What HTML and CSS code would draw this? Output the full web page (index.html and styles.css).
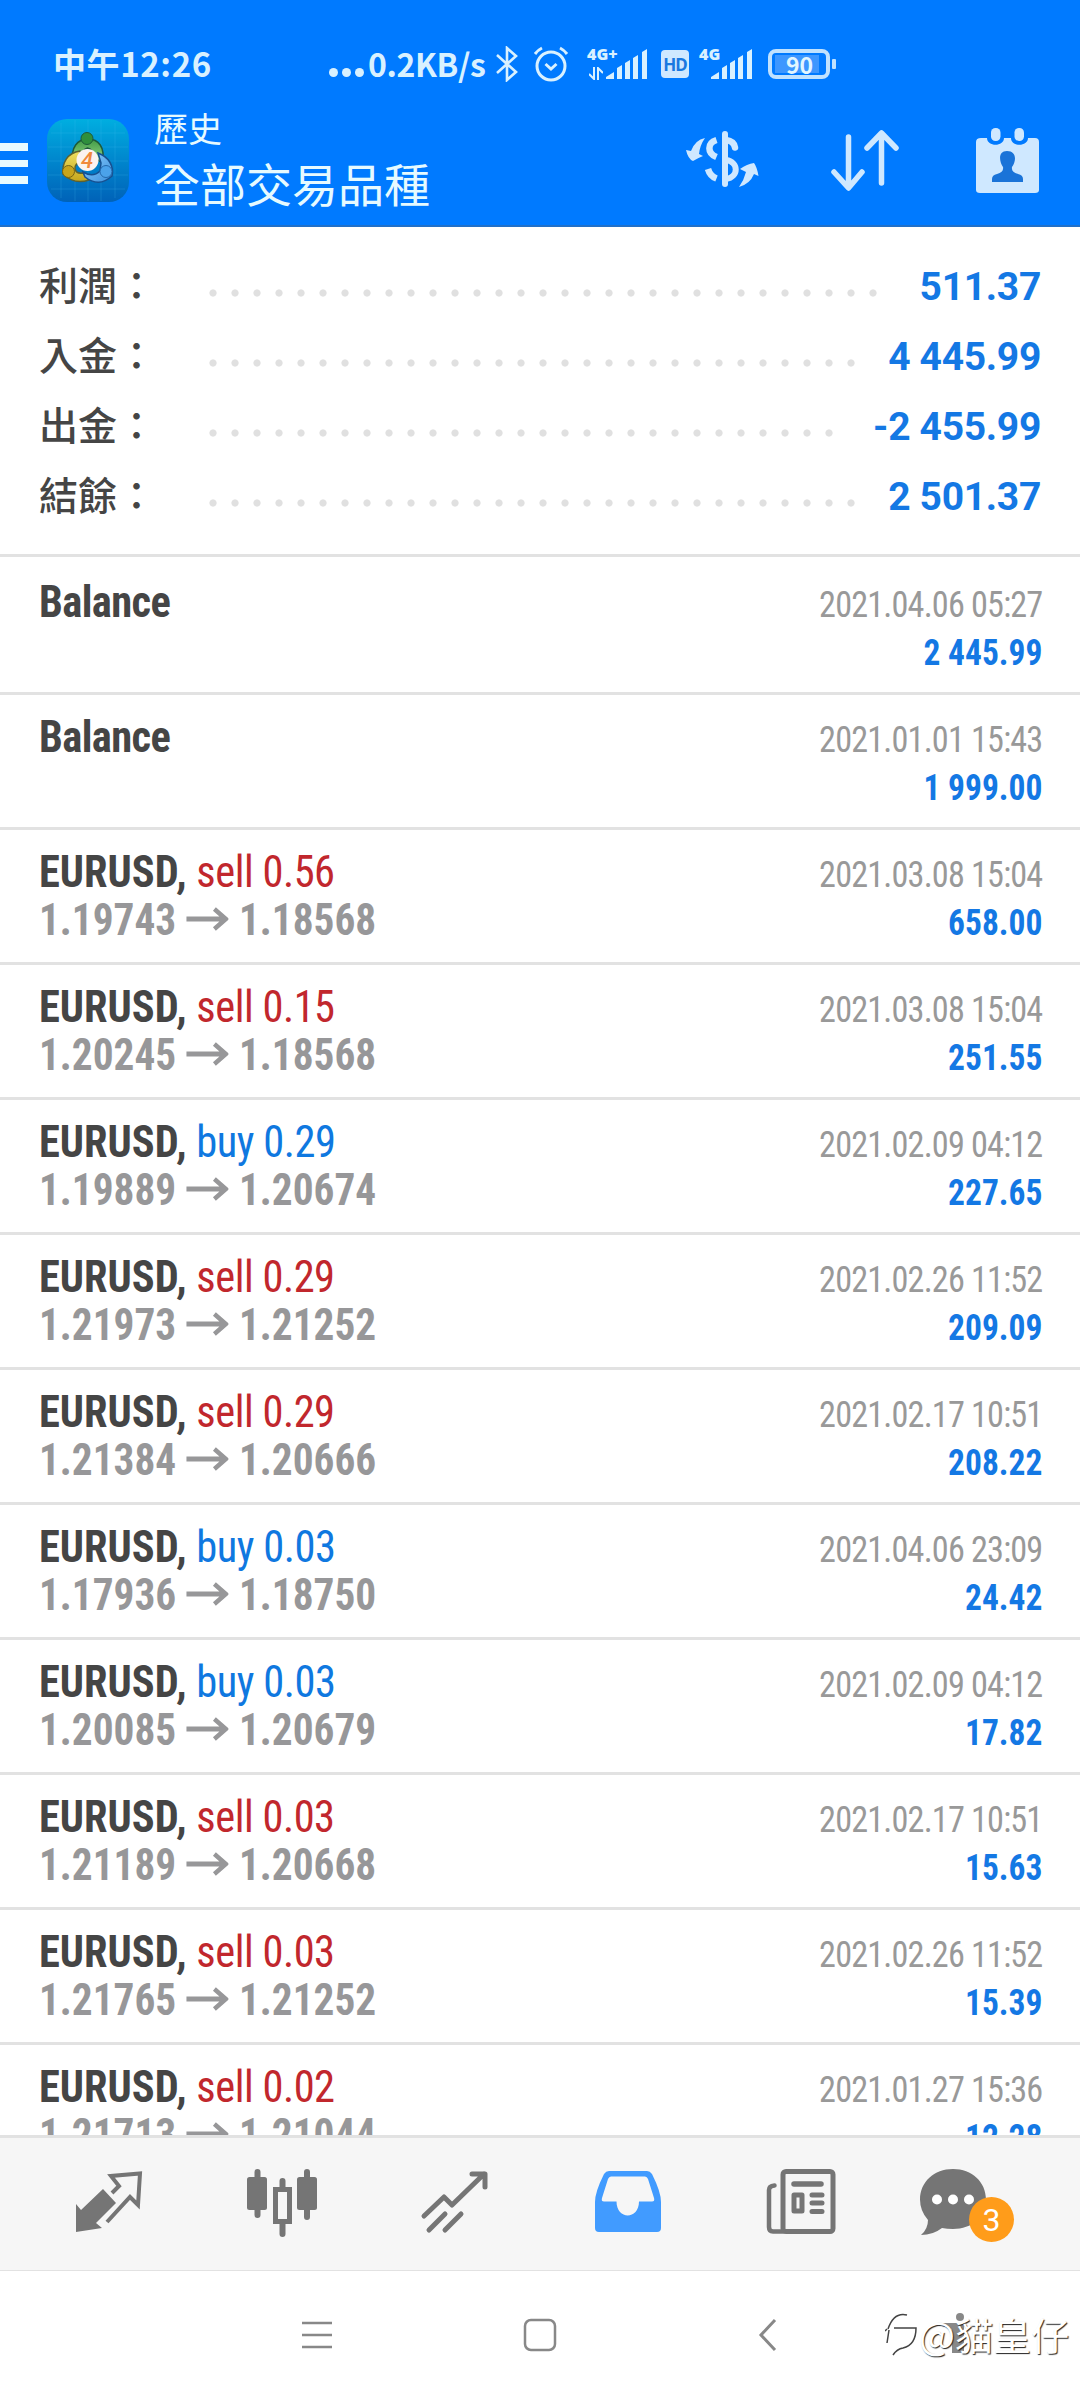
FILE: index.html
```html
<!DOCTYPE html>
<html lang="zh-Hant">
<head>
<meta charset="utf-8">
<title>歷史</title>
<link rel="stylesheet" href="styles.css">
</head>
<body>
<svg width="0" height="0" class="defs">
  <symbol id="arrow" viewBox="0 0 45 24"><path d="M0 12H43M30 2L42 12L30 22" fill="none" stroke="currentColor" stroke-width="4.800"/></symbol>
  <symbol id="bars" viewBox="0 0 42 30"><path d="M0 30v-2l8-5v7zM11 30V19l5-3v14zM19 30V14l5-3v19zM27 30V9l5-3v24zM36 30V3l5-3v30z" fill="currentColor"/></symbol>
</svg>
<div class="screen">
  <header class="top">
    <div class="status">
      <span class="clock">中午12:26</span>
      <span class="dots3"><i></i><i></i><i></i></span>
      <span class="speed">0.2KB/s</span>
      <svg class="bt" width="22" height="36" viewBox="0 0 22 36"><path d="M1 9L20 26L11 34V2L20 10L1 27" fill="none" stroke="currentColor" stroke-width="2.600"/></svg>
      <svg class="alarm" width="36" height="36" viewBox="0 0 36 36" fill="none" stroke="currentColor" stroke-width="3"><circle cx="18" cy="20" r="14"/><path d="M12.500 18L18 23L23.500 18M2 8Q5 4 9 2M34 8Q31 4 27 2"/></svg>
      <span class="net"><b>4G+</b><svg width="14" height="13" viewBox="0 0 14 13"><path d="M5 0V12L0 7M9 13V1L14 6" fill="none" stroke="currentColor" stroke-width="2"/></svg></span>
      <svg class="sig" width="42" height="30"><use href="#bars"/></svg>
      <span class="hd">HD</span>
      <span class="net net2"><b>4G</b></span>
      <svg class="sig" width="42" height="30"><use href="#bars"/></svg>
      <span class="batt"><span class="level">90</span></span><i class="cap"></i>
    </div>
    <div class="bar">
      <div class="burger"><i></i><i></i><i></i></div>
      <svg class="logo" width="82" height="83" viewBox="0 0 82 83">
        <defs>
          <linearGradient id="sky" x1="0" y1="0" x2="0" y2="1"><stop offset="0" stop-color="#00aee0"/><stop offset=".5" stop-color="#0086cd"/><stop offset="1" stop-color="#0062b8"/></linearGradient>
          <linearGradient id="grn" x1="0" y1="0" x2="0" y2="1"><stop offset="0" stop-color="#3f9a45"/><stop offset="1" stop-color="#9cd98a"/></linearGradient>
          <linearGradient id="ylw" x1="0" y1="0" x2="0" y2="1"><stop offset="0" stop-color="#f0e060"/><stop offset="1" stop-color="#c4a61c"/></linearGradient>
          <linearGradient id="blu" x1="0" y1="0" x2="1" y2="1"><stop offset="0" stop-color="#8ed0ff"/><stop offset="1" stop-color="#3a8edb"/></linearGradient>
        </defs>
        <rect width="82" height="83" rx="20" fill="url(#sky)"/>
        <path d="M14 4V79M28 1V82M41 1V82M54 1V82M68 4V79M4 14H78M1 28H81M1 42H81M1 56H81M4 70H78" stroke="#4cc3ee" stroke-opacity=".2" fill="none"/>
        <path d="M26 44C23 28 31 20 41 20S59 28 55 44L47 38Q46 30 40.500 29Q35 30 34 40Z" fill="url(#grn)" stroke="#1d5a3a" stroke-width="1.500"/>
        <path d="M33 32C20 34 15 44 16 55Q27 66 42 61L36 54Q29 55 28 50T35 42Z" fill="url(#ylw)" stroke="#5d6130" stroke-width="1.500"/>
        <path d="M51 34C62 38 67 47 65 57Q52 69 38 58L36 53Q46 59 53 52L54 44Z" fill="url(#blu)" stroke="#175090" stroke-width="1.500"/>
        <circle cx="40" cy="19.500" r="6" fill="#2f8f3c" stroke="#1d5a3a"/>
        <circle cx="21.500" cy="52.500" r="6" fill="#c8a51c" stroke="#746417"/>
        <circle cx="59" cy="52.500" r="6" fill="#4ba2ea" stroke="#2368ac"/>
        <circle cx="40.500" cy="41" r="11" fill="#fbf3ef"/>
        <text x="40" y="48.500" text-anchor="middle" class="four">4</text>
      </svg>
      <div class="titles"><div class="t1">歷史</div><div class="t2">全部交易品種</div></div>
      <div class="actions">
        <svg width="74" height="66" viewBox="0 0 74 66"><g fill="none" stroke="currentColor"><path d="M40 6V56" stroke-width="6" stroke-linecap="round"/><path d="M31.500 12C22 15 22 25 31.500 29M23 41Q25 48 31.500 50.500" stroke-width="6.500"/><path d="M41 12Q49 13 50 19.500" stroke-width="6.500" stroke-linecap="round"/><path d="M41 32C54 34 54 49 41 51" stroke-width="6"/></g><path d="M1 22L6 23Q10 12 20 10Q15 17 14 26L18 28Q13 30 8 33Q3 31 1 22ZM54 59Q59 52 61 44L55 41Q62 36 69 35Q72 39 73.500 48L69 46Q65 56 54 59Z" fill="currentColor"/></svg>
        <svg width="68" height="66" viewBox="0 0 68 66"><path d="M17.500 9V59M3 44L17.500 60L31 44M50.500 55V6M36 20L50.500 5L65 20" fill="none" stroke="currentColor" stroke-width="5.500" stroke-linecap="round" stroke-linejoin="round"/></svg>
        <svg width="64" height="66" viewBox="0 0 64 66"><path d="M5 10H11C11 19 28 19 28 10H35C35 19 52 19 52 10H59Q63 10 63 14V62Q63 65 59 65H4Q0 65 0 62V14Q0 10 5 10Z" fill="currentColor"/><rect x="15" y="0" width="9.500" height="13" rx="4.500" fill="currentColor"/><rect x="38.500" y="0" width="9.500" height="13" rx="4.500" fill="currentColor"/><path d="M31 23C22 23 23 33 27 39Q28 44 21 46Q16 47 16 51V54H47V51Q47 47 42 46Q35 44 36 39C41 32 40 23 31 23Z" fill="#1a73d8"/></svg>
      </div>
    </div>
  </header>

  <section class="summary">
    <div class="sum"><span class="lab">利潤：</span><span class="lead" style="--n:31"></span><span class="val">511.37</span></div>
    <div class="sum"><span class="lab">入金：</span><span class="lead" style="--n:30"></span><span class="val">4 445.99</span></div>
    <div class="sum"><span class="lab">出金：</span><span class="lead" style="--n:29"></span><span class="val">-2 455.99</span></div>
    <div class="sum"><span class="lab">結餘：</span><span class="lead" style="--n:30"></span><span class="val">2 501.37</span></div>
  </section>

  <main class="list">
    <div class="row"><div class="l"><div class="sym bal">Balance</div></div><div class="r"><div class="date">2021.04.06 05:27</div><div class="amt">2 445.99</div></div></div>
    <div class="row"><div class="l"><div class="sym bal">Balance</div></div><div class="r"><div class="date">2021.01.01 15:43</div><div class="amt">1 999.00</div></div></div>
    <div class="row"><div class="l"><div class="sym">EURUSD, <span class="sell">sell 0.56</span></div><div class="px">1.19743<svg><use href="#arrow"/></svg>1.18568</div></div><div class="r"><div class="date">2021.03.08 15:04</div><div class="amt">658.00</div></div></div>
    <div class="row"><div class="l"><div class="sym">EURUSD, <span class="sell">sell 0.15</span></div><div class="px">1.20245<svg><use href="#arrow"/></svg>1.18568</div></div><div class="r"><div class="date">2021.03.08 15:04</div><div class="amt">251.55</div></div></div>
    <div class="row"><div class="l"><div class="sym">EURUSD, <span class="buy">buy 0.29</span></div><div class="px">1.19889<svg><use href="#arrow"/></svg>1.20674</div></div><div class="r"><div class="date">2021.02.09 04:12</div><div class="amt">227.65</div></div></div>
    <div class="row"><div class="l"><div class="sym">EURUSD, <span class="sell">sell 0.29</span></div><div class="px">1.21973<svg><use href="#arrow"/></svg>1.21252</div></div><div class="r"><div class="date">2021.02.26 11:52</div><div class="amt">209.09</div></div></div>
    <div class="row"><div class="l"><div class="sym">EURUSD, <span class="sell">sell 0.29</span></div><div class="px">1.21384<svg><use href="#arrow"/></svg>1.20666</div></div><div class="r"><div class="date">2021.02.17 10:51</div><div class="amt">208.22</div></div></div>
    <div class="row"><div class="l"><div class="sym">EURUSD, <span class="buy">buy 0.03</span></div><div class="px">1.17936<svg><use href="#arrow"/></svg>1.18750</div></div><div class="r"><div class="date">2021.04.06 23:09</div><div class="amt">24.42</div></div></div>
    <div class="row"><div class="l"><div class="sym">EURUSD, <span class="buy">buy 0.03</span></div><div class="px">1.20085<svg><use href="#arrow"/></svg>1.20679</div></div><div class="r"><div class="date">2021.02.09 04:12</div><div class="amt">17.82</div></div></div>
    <div class="row"><div class="l"><div class="sym">EURUSD, <span class="sell">sell 0.03</span></div><div class="px">1.21189<svg><use href="#arrow"/></svg>1.20668</div></div><div class="r"><div class="date">2021.02.17 10:51</div><div class="amt">15.63</div></div></div>
    <div class="row"><div class="l"><div class="sym">EURUSD, <span class="sell">sell 0.03</span></div><div class="px">1.21765<svg><use href="#arrow"/></svg>1.21252</div></div><div class="r"><div class="date">2021.02.26 11:52</div><div class="amt">15.39</div></div></div>
    <div class="row"><div class="l"><div class="sym">EURUSD, <span class="sell">sell 0.02</span></div><div class="px">1.21713<svg><use href="#arrow"/></svg>1.21044</div></div><div class="r"><div class="date">2021.01.27 15:36</div><div class="amt">12.28</div></div></div>
  </main>

  <nav class="tabs">
    <svg width="72" height="72" viewBox="0 0 72 72"><path d="M3 36L8 42L30 21L43 35L23 55L29 60L3 64Z" fill="currentColor"/><path d="M39 25L46 18L38 8L67 5.500L65 37L57 29L34 54" fill="none" stroke="currentColor" stroke-width="4"/></svg>
    <svg width="72" height="72" viewBox="0 0 72 72"><g stroke="currentColor" stroke-width="6" stroke-linecap="round"><path d="M11.500 4V47M61 4V49M36.500 13V20M36.500 56V66"/></g><rect x="1" y="9" width="20" height="33" rx="2.500" fill="currentColor"/><rect x="51" y="9" width="20" height="33" rx="2.500" fill="currentColor"/><rect x="29.500" y="21.500" width="14" height="32" fill="none" stroke="currentColor" stroke-width="5"/></svg>
    <svg width="72" height="72" viewBox="0 0 72 72"><path d="M5 48L25 29L33 37L65 6M53 6H66V19M10 62L26 46M26 62L42 46" fill="none" stroke="currentColor" stroke-width="5" stroke-linecap="round" stroke-linejoin="round"/></svg>
    <svg class="on" width="72" height="72" viewBox="0 0 72 72"><path fill-rule="evenodd" d="M17 3H55Q58 3 60 6Q69 24 69 34V60Q69 64 65 64H7Q3 64 3 60V34Q3 24 12 6Q14 3 17 3ZM19 8.500Q17 8.500 16 11L10 30Q9 33.500 12 33.500H24.500C24.500 52 47 52 47 33.500H60Q63 33.500 62 30L56 11Q55 8.500 53 8.500Z" fill="currentColor"/></svg>
    <svg width="72" height="72" viewBox="0 0 72 72" fill="none" stroke="currentColor" stroke-linecap="round"><rect x="18" y="3.500" width="50" height="60" rx="3" stroke-width="5"/><path d="M18 63.500H8Q4 63.500 4 59V22Q4 18 9.500 17.500" stroke-width="4.500"/><path d="M29 16H56" stroke-width="5.500"/><rect x="29" y="27" width="8" height="16" stroke-width="5" stroke-linejoin="round"/><path d="M47 27H57M47 35H57M47 43.500H57" stroke-width="5"/></svg>
    <div class="chat"><svg width="72" height="72" viewBox="0 0 72 72"><path d="M36 1C55 1 69 14 69 31.500S55 61 36 61Q30 61 25 60Q16 67 4 67Q11 61 11 52Q3 43 3 31.500C3 14 17 1 36 1Z" fill="currentColor"/><circle cx="20" cy="31.500" r="5" fill="#fff"/><circle cx="36" cy="31.500" r="5" fill="#fff"/><circle cx="52" cy="31.500" r="5" fill="#fff"/></svg><span class="badge">3</span></div>
  </nav>

  <footer class="sys">
    <svg width="30" height="34" viewBox="0 0 30 34"><path d="M0 5H30M0 17H30M0 29H30" stroke="currentColor" stroke-width="2.500"/></svg>
    <svg width="34" height="34" viewBox="0 0 34 34"><rect x="2" y="2" width="30" height="30" rx="6" fill="none" stroke="currentColor" stroke-width="2.500"/></svg>
    <svg width="20" height="34" viewBox="0 0 20 34"><path d="M17 2L3 17L17 32" fill="none" stroke="currentColor" stroke-width="3"/></svg>
    <svg width="40" height="44" viewBox="0 0 40 44"><circle cx="20" cy="5" r="4" fill="currentColor"/><path d="M2 11H24V41H12V17L2 14Z" fill="currentColor"/></svg>
    <div class="mark"><svg width="34" height="46" viewBox="0 0 34 46"><path d="M3 18C7 6 14 2 22 4M2 18L0 20M9 17H31Q31 34 18 37Q12 38 8 44M4 19L2 32" class="mk"/></svg><span>@貓皇仔</span></div>
  </footer>
</div>
</body>
</html>
```
FILE: styles.css
```css
* { box-sizing: border-box; }
body { margin: 0; background: #fff; font-family: Roboto, "Noto Sans CJK TC", sans-serif; }
svg { display: block; flex: none; }
.defs { position: absolute; }
.screen { width: 1080px; height: 2400px; display: flex; flex-direction: column; overflow: hidden; }

.top { height: 227px; flex: none; background: #007aff; border-bottom: 2px solid #2170c8; color: #cfe8ff; }
.status { height: 112px; padding: 16px 0 0 53px; display: flex; align-items: center; font-family: "Noto Sans CJK TC", sans-serif; font-weight: 500; color: #d9f1ff; }
.clock { width: 276px; margin-top: -2px; font-size: 33px; letter-spacing: .6px; font-weight: 700; white-space: nowrap; }
.dots3 { display: flex; gap: 4px; width: 39px; padding-top: 17px; }
.dots3 i { width: 9px; height: 9px; border-radius: 50%; background: currentColor; }
.speed { width: 128px; margin-top: -2px; font-size: 32px; font-weight: 700; letter-spacing: -.4px; white-space: nowrap; }
.bt { margin-right: 15px; }
.alarm { margin-right: 18px; }
.net { width: 19px; height: 32px; display: flex; flex-direction: column; justify-content: space-between; white-space: nowrap; font: 700 16px/12px "Noto Sans", sans-serif; }
.net svg { margin-left: 2px; }
.net2 { width: 12px; }
.hd { width: 28px; height: 28px; margin: 0 10px 0 13px; border-radius: 4px; background: #cfe8ff; color: #1a78e0; font: 700 17px/29px "Noto Sans", sans-serif; text-align: center; letter-spacing: -1px; }
.batt { margin-left: 15px; width: 62px; height: 30px; border: 4px solid #c0e2ff; border-radius: 8px; padding: 2px 3px; display: flex; }
.level { width: 44px; padding-left: 5px; background: #3d97ff; color: #e2f6ff; font-size: 23px; font-weight: 700; line-height: 18px; text-align: center; display: block; }
.cap { width: 4px; height: 10px; margin-left: 2px; border-radius: 1px; background: #c0e2ff; }

.bar { display: flex; height: 113px; }
.burger { width: 47px; padding-top: 31px; display: flex; flex-direction: column; gap: 9px; }
.burger i { width: 28px; height: 7.5px; background: #e8faff; }
.logo { margin-top: 7px; }
.four { font: italic 500 22px Roboto, sans-serif; fill: #f08a3c; }
.titles { margin: -3px 0 0 25px; width: 531px; color: #e6faff; font-family: "Noto Sans CJK TC", sans-serif; font-weight: 400; white-space: nowrap; }
.t1 { font-size: 34px; line-height: 38px; }
.t2 { font-size: 46px; line-height: 56px; margin-top: 7px; }
.actions { padding-top: 16px; display: flex; }
.actions svg:nth-child(2) { margin-left: 72px; }
.actions svg:nth-child(3) { margin-left: 77px; }

.summary { height: 330px; flex: none; padding-top: 24px; border-bottom: 3px solid #e2e2e2; }
.sum { height: 70px; padding: 0 39px; display: flex; align-items: center; }
.lab { width: 163px; font-size: 39px; line-height: 60px; font-weight: 500; color: #454545; white-space: nowrap; padding-top: 1px; }
.lead { width: calc(var(--n) * 22px); height: 8px; margin-top: 14px; background: radial-gradient(circle at center, #e0e0e0 3.2px, transparent 4px) 0 0 / 22px 8px repeat-x; }
.val { margin-left: auto; padding-top: 1px; font-size: 39px; font-weight: 700; letter-spacing: -.3px; color: #1478e4; white-space: pre; }

.list { flex: 1; min-height: 0; overflow: hidden; padding-top: 3px; font-family: "Roboto Condensed", Roboto, sans-serif; font-stretch: 75%; }
.row { height: 135px; border-bottom: 3px solid #e2e2e2; padding: 18px 38px 0 39px; display: flex; justify-content: space-between; white-space: pre; }
.l, .r { line-height: 48px; }
.l > div { transform-origin: 0 50%; }
.r { text-align: right; padding-top: 3px; }
.r > div { transform-origin: 100% 50%; }
.sym { font-size: 44px; height: 48px; font-weight: 700; color: #454545; transform: scaleX(.965); }
.bal { letter-spacing: -.6px; }
.sym span { font-weight: 400; letter-spacing: -.5px; }
.sell { color: #c1272d; }
.buy { color: #0f78e0; }
.px { display: flex; font-size: 44px; font-weight: 700; color: #979799; transform: scaleX(.938); }
.px svg { width: 45px; height: 24px; margin: 11px 11px 0; }
.date { font-size: 37px; color: #999; letter-spacing: -.9px; transform: scaleX(.925); }
.amt { font-size: 36px; font-weight: 700; color: #1478e4; transform: scaleX(.93); }

.tabs { height: 136px; flex: none; background: #f6f6f6; border-top: 3px solid #e2e2e2; border-bottom: 1px solid #e2e2e2; color: #757575; display: flex; gap: 101px; padding: 30px 0 0 73px; }
.on { color: #419bff; }
.chat { position: relative; margin-left: -21px; }
.badge { position: absolute; left: 52px; top: 29px; width: 45px; height: 45px; border-radius: 50%; background: #ff9c1a; color: #fff; font-size: 32px; line-height: 46px; text-align: center; }

.sys { height: 129px; flex: none; position: relative; color: #888; display: flex; padding: 47px 0 0 302px; }
.sys > svg:nth-child(2) { margin-left: 191px; }
.sys > svg:nth-child(3) { margin-left: 201px; }
.sys > svg:nth-child(4) { margin-left: 162px; margin-top: -6px; }
.mark { position: absolute; left: 885px; top: 39px; display: flex; align-items: center; }
.mark span { font: 400 38px/48px "Noto Sans CJK TC", sans-serif; color: #fff; text-shadow: 1px 1px 1px #222; white-space: nowrap; }
.mk { fill: none; stroke: #444; stroke-width: 1.5; }
```
